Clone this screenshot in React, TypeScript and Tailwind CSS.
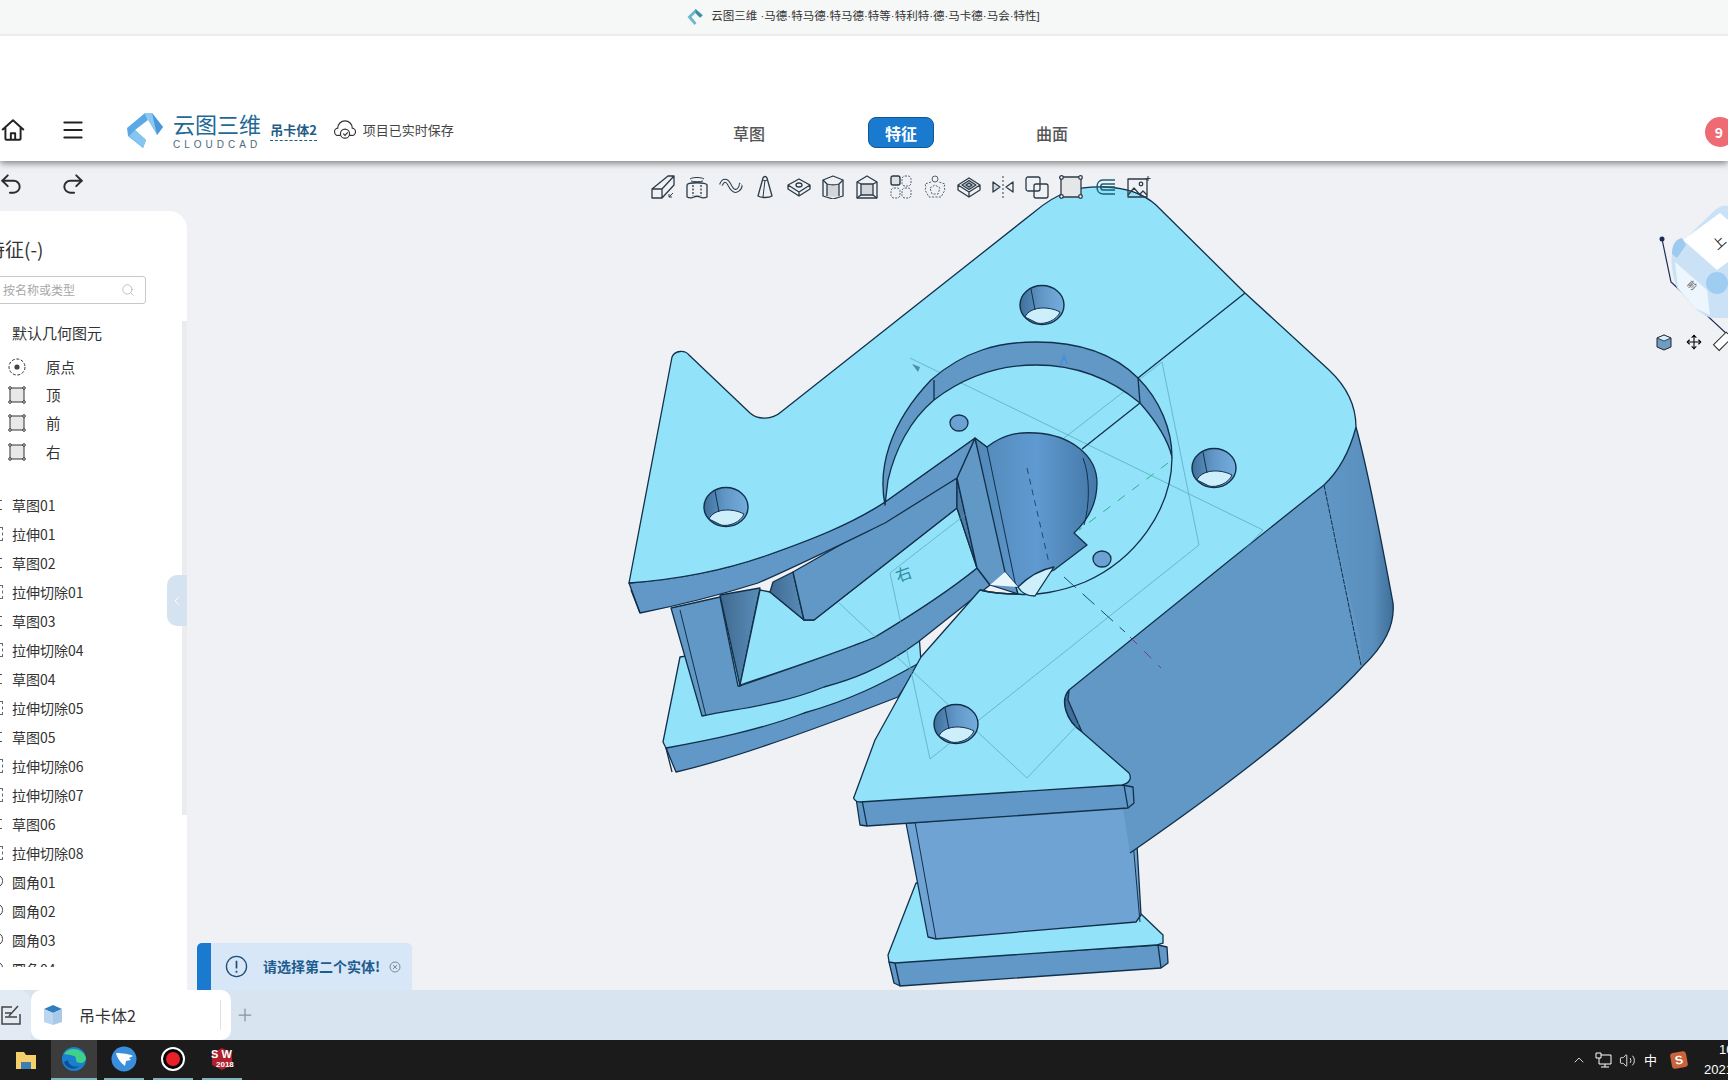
import { Undo2, Redo2, Search, ChevronLeft, Plus, ChevronUp, Volume2, Menu, Move } from "lucide-react";

const CJK = { fontFamily: '"Noto Sans CJK SC", "Noto Sans", sans-serif' };
const LATIN = { fontFamily: '"Liberation Sans", "Noto Sans CJK SC", sans-serif' };

const treeRows = [
  ["草图01", "s"], ["拉伸01", "e"], ["草图02", "s"], ["拉伸切除01", "e"], ["草图03", "s"],
  ["拉伸切除04", "e"], ["草图04", "s"], ["拉伸切除05", "e"], ["草图05", "s"], ["拉伸切除06", "e"],
  ["拉伸切除07", "e"], ["草图06", "s"], ["拉伸切除08", "e"], ["圆角01", "f"], ["圆角02", "f"],
  ["圆角03", "f"], ["圆角04", "f"],
];

const PlaneIcon = () => (
  <svg width="18" height="18" viewBox="0 0 18 18" fill="none" stroke="#333" strokeWidth="1">
    <rect x="2" y="2" width="14" height="14" fill="#e8e8e8" />
    <circle cx="2" cy="2" r="1.3" fill="#fff" />
    <circle cx="16" cy="2" r="1.3" fill="#fff" />
    <circle cx="2" cy="16" r="1.3" fill="#fff" />
    <circle cx="16" cy="16" r="1.3" fill="#fff" />
  </svg>
);

const toolIcons = [
  <g key="a"><path d="M1 14h10v9H1zM1 14L17 1h6v9L11 23M11 14L23 1" /><path d="M22 18l-4 4M18 19v3h3" strokeWidth="1" /></g>,
  <g key="b"><path d="M2 10c0-3 20-3 20 0v12c-2 1-5 1-7 0-1-1-5-1-6 0-2 1-5 1-7 0z" /><path d="M8 10v11M16 10v11" strokeDasharray="2 1.5" /><path d="M5 4c3-2 11-2 14 0M6 6c3 1 9 1 12 0" strokeWidth="1" /></g>,
  <g key="c"><path d="M2 10c2-6 6-5 8-1s5 9 9 6 2-5 3-6" strokeWidth="4" stroke="#2c3a47" /><path d="M2 10c2-6 6-5 8-1s5 9 9 6 2-5 3-6" strokeWidth="2" stroke="#eff1f4" /></g>,
  <g key="d"><path d="M10 3L5 21c3 2 11 2 14 0L14 3c-1-2-3-2-4 0z" /><path d="M10 5c1 1 3 1 4 0M12 5l-2 17" strokeWidth="1" /></g>,
  <g key="e"><path d="M12 4l11 6v4l-11 7L1 14v-4zM1 10l11 7 11-7M12 17v4" /><ellipse cx="12" cy="10" rx="3" ry="2" /></g>,
  <g key="f"><path d="M12 1l10 4v16l-10 3-10-3V5z" /><path d="M6 9c3 1 9 1 12 0v12c-3 1-9 1-12 0z" fill="#d2d6da" stroke="none" /><path d="M2 5l4 4c3 1 9 1 12 0l4-4M6 9v12M18 9v12" /></g>,
  <g key="g"><path d="M12 1l10 6v16H2V7z" /><path d="M6 9h12v11H6z" fill="#d2d6da" /><path d="M2 7l4 2M22 7l-4 2M6 20l-4 3M18 20l4 3" /></g>,
  <g key="h"><rect x="2" y="1" width="9" height="9" rx="2" strokeWidth="1.4" fill="#dfe2e5" /><g strokeDasharray="2 1.2" strokeWidth="1" stroke="#55616d"><rect x="13" y="1" width="9" height="10" rx="3" /><rect x="2" y="13" width="9" height="10" rx="3" /><rect x="13" y="13" width="9" height="10" rx="3" /></g></g>,
  <g key="i" strokeWidth="1" stroke="#55616d"><circle cx="12" cy="4" r="3" /><g strokeDasharray="2 1.4"><path d="M8 7L2 9l1 3-1 3 4 7h12l4-7-1-3 1-3-6-2" /><path d="M7 13l5-3 5 3-2 6H9z" /></g></g>,
  <g key="j"><path d="M12 3l11 7v5l-11 7L1 15v-5zM1 10l11 7 11-7M12 17v5" /><path d="M12 5.5l7 4.5-7 4.5L5 10z" fill="#b8c8d2" /><path d="M12 8l3 2-3 2-3-2z" /></g>,
  <g key="k"><path d="M12 1v22" strokeDasharray="2 2" strokeWidth="1" /><path d="M2 7l7 5-7 5z" fill="#d2d6da" /><path d="M22 7l-7 5 7 5z" /></g>,
  <g key="l"><rect x="1" y="2" width="14" height="14" rx="2" /><rect x="9" y="9" width="14" height="14" rx="2" /></g>,
  <g key="m"><rect x="2" y="2" width="20" height="20" fill="#e4e6e8" /><circle cx="2.5" cy="2.5" r="1.8" fill="#fff" /><circle cx="21.5" cy="2.5" r="1.8" fill="#fff" /><circle cx="2.5" cy="21.5" r="1.8" fill="#fff" /><circle cx="21.5" cy="21.5" r="1.8" fill="#fff" /></g>,
  <g key="n" stroke="#1d5f73" strokeWidth="1.5"><path d="M22 5H10c-8 0-8 14 0 14h12M22 9H10c-3 0-3 6 0 6h12M7 12h15" /></g>,
  <g key="o"><rect x="1" y="4" width="19" height="18" /><path d="M1 20l6-7 7 8M13 19l3-3 4 4" /><circle cx="14" cy="9" r="1.8" /><path d="M21 1v5M18.5 3.5h5" strokeWidth="1" /></g>,
];

// model is drawn in page coordinates, the svg starts at y=161
const Hole = ({ cx, cy }: { cx: number; cy: number }) => (
  <g>
    <ellipse cx={cx} cy={cy} rx="22" ry="19.5" fill="url(#holeGrad)" stroke="#12304a" strokeWidth="1.4" />
    <path d={`M${cx - 17} ${cy + 12} C${cx - 12} ${cy + 1} ${cx + 7} ${cy + 1} ${cx + 18} ${cy + 7} C${cx + 15} ${cy + 15} ${cx + 3} ${cy + 20} ${cx - 5} ${cy + 18} Z`} fill="#cdeefb" stroke="#12304a" strokeWidth="1" />
    <path d={`M${cx - 11} ${cy - 16} L${cx - 7} ${cy + 5}`} stroke="#12304a" strokeWidth="1" />
  </g>
);

const Model = () => (
  <svg className="absolute left-0 top-0" width="1728" height="829" viewBox="0 161 1728 829" fill="none">
    <defs>
      <linearGradient id="holeGrad" x1="0" x2="1" y1="0" y2="0">
        <stop offset="0" stopColor="#3f6f9c" />
        <stop offset="0.5" stopColor="#6298c8" />
        <stop offset="1" stopColor="#74aede" />
      </linearGradient>
      <linearGradient id="rimGrad" x1="0" x2="1" y1="0" y2="0">
        <stop offset="0" stopColor="#6097c6" />
        <stop offset="0.7" stopColor="#5a8fbd" />
        <stop offset="1" stopColor="#3f6f9a" />
      </linearGradient>
      <linearGradient id="cylGrad" x1="0" x2="1" y1="0" y2="0">
        <stop offset="0" stopColor="#5288b8" />
        <stop offset="0.5" stopColor="#5f9ad0" />
        <stop offset="1" stopColor="#4478a8" />
      </linearGradient>
      <linearGradient id="darkGrad" x1="0" x2="1" y1="0" y2="0">
        <stop offset="0" stopColor="#3f6a90" />
        <stop offset="1" stopColor="#5a8dba" />
      </linearGradient>
    </defs>
    <g stroke="#12304a" strokeWidth="1.3" strokeLinejoin="round">
      {/* bottom plate */}
      <path d="M889 962L1158 945L1167 947L1168 963L1161 968L900 986L894 983Z" fill="#6298c8" />
      <path d="M888 955L916 883L1120 880L1140 913L1163 935L1163 943L1156 945L895 963L889 962Z" fill="#92e2fa" />
      <path d="M895 963L900 986M1158 945L1161 968" />
      {/* column under the arrow */}
      <path d="M906 823L1110 808L1125 808L1135 810L1141 915L1136 922L936 939L928 937Z" fill="#6fa3d3" />
      <path d="M915 822L936 939M1130 808L1140 922" strokeWidth="1" />
      {/* body side wall */}
      <path d="M1356 427C1368 470 1385 560 1393 603C1395 625 1385 645 1362 667C1328 705 1250 770 1130 853L1120 790L1082 732C1065 720 1060 700 1069 690L1230 560L1324 485Z" fill="#6298c6" stroke="none" />
      <path d="M1362 667C1328 705 1250 770 1130 853" />
      <path d="M1356 427C1368 470 1385 560 1393 603C1395 625 1385 645 1362 667L1360 640L1324 485Z" fill="url(#rimGrad)" stroke="none" />
      <path d="M1356 427C1368 470 1385 560 1393 603C1395 625 1385 645 1362 667" />
      <path d="M1324 485L1361 665" strokeWidth="1" strokeDasharray="5 1" />
      <path d="M1069 690C1060 700 1065 720 1082 732L1068 700Z" fill="#3f6f9a" />
      {/* lower left plate */}
      <path d="M666 748L676 772C720 762 800 735 898 697L921 662L804 713Z" fill="#6298c8" />
      <path d="M663 742L680 657L918 620L921 662C880 685 850 700 804 713C760 730 710 740 666 748Z" fill="#92e2fa" />
      <path d="M666 748L672 772" />
      {/* frame under the arrow */}
      <path d="M671 608L720 597L738 686L740 686C800 665 845 650 875 637C920 610 950 590 977 568L990 585L918 642C880 670 850 680 824 687C780 705 740 708 702 716Z" fill="#6298c6" />
      <path d="M680 610L706 716" strokeWidth="1" />
      <path d="M720 595L760 588L740 686Z" fill="url(#darkGrad)" />
      {/* floor below the arrow */}
      <path d="M740 685L760 590L770 592L804 620L814 620L957 508L977 568C950 590 920 610 875 637C845 650 800 665 740 685Z" fill="#92e2fa" />
      <path d="M773 582L793 572L804 620L770 592Z" fill="url(#darkGrad)" />
      <path d="M793 572L957 478L957 508L814 620L804 620Z" fill="#6298c6" />
      <path d="M957 478L977 568L957 508Z" fill="#4d7ba6" />
      <path d="M957 478L975 438L1018 594L990 585L977 568Z" fill="#6298c6" />
      {/* upper arrow side */}
      <path d="M629 583L640 613C680 605 720 595 758 583C810 560 850 540 885 523L957 478L975 438L885 502C850 525 810 540 768 555C720 572 670 580 629 583Z" fill="#6298c8" />
      <path d="M631 590L640 613" />
      {/* middle arrow side */}
      <path d="M856 798L1122 785L1133 787L1134 803L1128 808L867 826L860 825Z" fill="#6298c8" />
      <path d="M862 800L867 826M1124 785L1128 808" />
      {/* top face, recess floor included */}
      <path d="M629 583L672 357C675 350 685 350 689 355L750 413C758 420 772 420 781 412L1033 213C1060 190 1080 186 1105 187C1130 188 1145 195 1156 205L1245 293L1329 370C1345 385 1356 405 1356 427C1350 450 1340 470 1324 485L1230 560L1069 690C1060 700 1065 720 1082 732L1129 773C1132 778 1130 783 1122 785L860 802C855 802 853 798 854 797L875 740L921 657L980 590C992 593 1006 594 1018 594L975 438L885 502C850 525 810 540 768 555C720 572 670 580 629 583Z" fill="#92e2fa" />
      {/* datum planes */}
      <g stroke="#4fa3b4" strokeWidth="0.8" opacity="0.8">
        <path d="M1162 362L1199 545L930 759L890 573L1162 362" />
        <path d="M910 358L1263 530L1027 778L839 603" />
      </g>
      {/* recess wall */}
      <path d="M885 505C878 470 888 425 931 380C965 350 1000 342 1036 342C1080 342 1115 355 1138 378C1160 400 1172 430 1172 457C1168 440 1155 420 1140 403C1110 378 1075 365 1036 365C995 365 960 380 934 400C910 420 895 450 888 480Z" fill="#6298c6" />
      <path d="M934 380L934 400M1138 378L1140 403" />
      {/* recess floor rim */}
      <path d="M1172 457C1172 510 1135 560 1085 582C1060 592 1035 596 1018 594C1006 594 992 593 980 590" />
      <path d="M1245 293L1138 378M1140 403L1082 449" />
      {/* bore */}
      <path d="M987 447C1005 433 1020 432 1036 433C1070 435 1097 455 1097 483C1097 505 1088 520 1074 533L1087 545L1054 570L1018 587L1005 572L975 438Z" fill="url(#cylGrad)" />
      <path d="M975 438L987 447L1016 587M1083 458C1090 475 1090 505 1084 525" strokeWidth="1" />
      <path d="M1018 587C1025 580 1038 570 1054 567L1035 596C1028 596 1022 594 1018 587Z" fill="#cdeefb" />
      <path d="M1018 587L1005 572L990 585Z" fill="#e8f6fb" stroke="none" />
      {/* holes */}
      <Hole cx={1042} cy={305} />
      <Hole cx={726} cy={507} />
      <Hole cx={1214} cy={468} />
      <Hole cx={956} cy={724} />
      <ellipse cx="959" cy="423" rx="9" ry="8" fill="#6ba2d2" />
      <ellipse cx="1102" cy="559" rx="9" ry="8" fill="#6ba2d2" />
    </g>
    <path d="M918 372l-6-8 8 3z" fill="#4f8fa0" />
    <text x="895" y="580" fontSize="16" fill="#2e8c9c" transform="rotate(-20 903 573)" style={CJK}>右</text>
    <path d="M1027 468L1049 563" stroke="#1c4a78" strokeWidth="1" strokeDasharray="6 5" />
    <path d="M1064 577L1125 632" stroke="#1c4a78" strokeWidth="1" strokeDasharray="16 9" />
    <path d="M1130 637L1161 668" stroke="#7a3b7e" strokeWidth="1" strokeDasharray="10 10" />
    <path d="M1168 463L1079 530" stroke="#2fb08a" strokeWidth="1" strokeDasharray="9 9" />
    <path d="M1060 366l4-10 3 8" stroke="#3d8ee0" strokeWidth="1.2" />
    {/* view cube */}
    <path d="M1662 239L1671 282L1728 335" stroke="#1c2a55" strokeWidth="1.2" />
    <circle cx="1662" cy="239" r="2.5" fill="#1c2a55" />
    <path d="M1672 252L1715 210Q1722 204 1728 206V318H1715Q1705 318 1695 308L1677 288Q1670 270 1672 252Z" fill="#cbe2f6" />
    <path d="M1683 240L1720 213L1728 220V262L1717 270Z" fill="#fff" />
    <path d="M1675 262L1707 290L1710 315L1695 308L1678 288Z" fill="#eef6fd" />
    <circle cx="1717" cy="283" r="11" fill="#9fcdf2" />
    <path d="M1672 254Q1672 240 1682 238L1686 245L1677 258Z" fill="#9ccaf0" />
    <text x="1712" y="247" fontSize="13" fill="#222" transform="rotate(-42 1719 242)" style={CJK}>上</text>
    <text x="1688" y="289" fontSize="9" fill="#555" transform="rotate(42 1693 285)" style={CJK}>前</text>
    <g transform="translate(1656 334)">
      <path d="M8 1l7 3v9l-7 3-7-3V4z" fill="#6f9cc0" stroke="#223" strokeWidth="1" />
      <path d="M1 4l7 3 7-3-7-3z" fill="#d8eefa" stroke="#223" strokeWidth="0.8" />
    </g>
    <g transform="translate(1686 334)" stroke="#222"><Move width="16" height="16" strokeWidth="1.6" /></g>
    <g transform="rotate(-45 1722 342)" stroke="#222" fill="#fff"><rect x="1714" y="338" width="18" height="8" /></g>
  </svg>
);

export default function App() {
  return (
    <div className="relative flex h-[1080px] w-[1728px] flex-col overflow-hidden bg-[#eff1f4]" style={CJK}>
      {/* window title */}
      <div className="z-20 flex h-[36px] items-center justify-center gap-[7px] border-b-2 border-[#ebecec] bg-[#f6f7f7] pr-[2px] text-[11.5px] text-[#333]" style={LATIN}>
        <svg width="18" height="18" viewBox="0 0 36 36"><path d="M19 2L3 18l14 16 4-4-10-12 8-8 9 10 6-6z" fill="#6fb6c8" /><path d="M19 2l14 14-6 2-8-8z" fill="#3d8ba0" /></svg>
        <span>云图三维 ·马德·特马德·特马德·特等·特利特·德·马卡德·马会·特性]</span>
      </div>

      {/* app header */}
      <div className="relative z-10 flex h-[125px] items-end bg-white pb-[9px] shadow-[0_2px_7px_rgba(0,0,0,0.5)]">
        <div className="flex h-[44px] items-center">
          <svg className="ml-0" width="26" height="26" viewBox="0 0 24 24" fill="none" stroke="#222" strokeWidth="1.8" strokeLinejoin="round">
            <path d="M2 12L12 3l10 9M5 10v10a1 1 0 001 1h12a1 1 0 001-1V10" />
            <path d="M10 21v-6h4v6" />
          </svg>
          <Menu className="ml-[34px] text-[#222]" size={26} strokeWidth={1.8} />
          <svg className="ml-[40px]" width="38" height="36" viewBox="0 0 38 36">
            <path d="M19 1L1 16l1 8 15 12 3-8-11-10 13-10z" fill="#5aa8e4" />
            <path d="M3 24l14 12 3-8-11-10z" fill="#86c6ee" />
            <path d="M19 1h7l11 14-6 8-9-15z" fill="#8cc8f0" />
            <path d="M26 1l11 14-6 8z" fill="#4a98da" />
          </svg>
          <div className="ml-[9px] flex flex-col leading-none">
            <span className="text-[22px] leading-[28px] text-[#1f6a96]">云图三维</span>
            <span className="mt-[1px] text-[10px] leading-[13px] tracking-[4px] text-[#4c6a7c]" style={{ fontFamily: '"Liberation Sans", sans-serif' }}>CLOUDCAD</span>
          </div>
          <span className="ml-[9px] mt-[2px] border-b border-dashed border-[#1f5d87] pb-[1px] text-[13px] font-bold leading-[18px] text-[#1f5d87]">吊卡体2</span>
          <svg className="ml-[17px]" width="22" height="20" viewBox="0 0 24 22" fill="none" stroke="#333" strokeWidth="1.3">
            <path d="M7 17H5a4 4 0 01-1-8 8 8 0 0116 0 4 4 0 01-1 8h-2" />
            <circle cx="12" cy="15" r="5" />
            <path d="M10 15l2 2 3-3.5" />
          </svg>
          <span className="ml-[7px] text-[13px] text-[#444]">项目已实时保存</span>
        </div>
      </div>
      <div className="pointer-events-none absolute left-[733px] top-[117px] z-10 flex h-[31px] items-center text-[16px] font-medium text-[#555]">
        <span className="w-[35px]">草图</span>
        <span className="ml-[100px] flex h-[31px] w-[66px] items-center justify-center rounded-[8px] border border-[#12578f] bg-[#1a7ad0] font-bold text-white">特征</span>
        <span className="ml-[102px]">曲面</span>
      </div>
      <div className="absolute right-[-7px] top-[117px] z-10 flex h-[30px] w-[30px] items-center justify-center rounded-full bg-[#ee6b73] pr-[2px] text-[14px] font-bold text-white">9</div>

      {/* workspace */}
      <div className="relative flex min-h-0 flex-1">
        <Model />
        <div className="relative z-[5] flex w-[187px] flex-col">
          <div className="flex h-[50px] items-center pb-[4px] pl-[1px] text-[#2c2c2c]">
            <Undo2 className="-ml-[3px]" size={26} strokeWidth={1.8} />
            <Redo2 className="ml-[36px]" size={26} strokeWidth={1.8} />
          </div>
          <div className="relative min-h-0 flex-1 overflow-hidden rounded-tr-[18px] bg-white">
            <div className="-ml-[14px] mt-[24px] text-[19px] leading-[28px] text-[#333]">特征(-)</div>
            <div className="-ml-[10px] mt-[13px] flex h-[28px] w-[156px] items-center justify-between rounded-[3px] border border-[#c8c8c8] pl-[12px] pr-[10px] text-[12px] text-[#a8a8a8]">
              按名称或类型
              <Search size={14} strokeWidth={1.2} />
            </div>
            <div className="mt-[14px] pl-[12px] text-[15px] leading-[29px] text-[#333]">默认几何图元</div>
            <div className="mt-[5.5px] flex flex-col text-[14.5px] text-[#333]">
              <div className="flex h-[28.3px] items-center gap-[20px] pl-[8px]">
                <svg width="18" height="18" viewBox="0 0 18 18" fill="none" stroke="#333"><circle cx="9" cy="9" r="8" strokeDasharray="3 1.6" /><circle cx="9" cy="9" r="2.6" fill="#444" stroke="none" /></svg>
                原点
              </div>
              {["顶", "前", "右"].map((t) => (
                <div key={t} className="flex h-[28.3px] items-center gap-[20px] pl-[8px]"><PlaneIcon />{t}</div>
              ))}
            </div>
            <div className="relative mt-[25px] flex h-[476px] flex-col overflow-hidden">
              {treeRows.map(([label, kind]) => (
                <div key={label} className="flex h-[29px] shrink-0 items-center pl-[12px] text-[14px] text-[#333]">
                  <span className="absolute left-0 h-[14px] w-[4px] overflow-hidden">
                    {kind === "s" && <span className="block h-[10px] w-[2px] translate-y-[2px] border-y border-[#555]" />}
                    {kind === "e" && <span className="block h-[14px] w-[3px] border-y border-r border-dashed border-[#667]" />}
                    {kind === "f" && <span className="-ml-[8px] block h-[12px] w-[11px] rounded-full border border-[#444]" />}
                  </span>
                  {label}
                </div>
              ))}
            </div>
            <div className="absolute bottom-[175px] right-0 top-[110px] w-[5px] bg-[#ebecee]" />
            <div className="absolute right-0 top-[364px] flex h-[51px] w-[20px] items-center justify-center rounded-l-[10px] bg-[#d5e3f0] text-white">
              <ChevronLeft size={16} strokeWidth={1.3} />
            </div>
          </div>
        </div>
        <div className="relative z-[5] flex min-w-0 flex-1 flex-col">
          <div className="flex gap-[10px] pl-[464px] pt-[14px]">
            {toolIcons.map((icon, i) => (
              <svg key={i} width="24" height="24" viewBox="0 0 24 24" fill="none" stroke="#2c3a47" strokeWidth="1.3" strokeLinejoin="round">{icon}</svg>
            ))}
          </div>
          <div className="mt-auto ml-[10px] flex h-[47px] w-[215px] items-center overflow-hidden rounded-t-[5px] bg-[#d8e7f7]">
            <div className="h-full w-[14px] bg-[#1a7ad0]" />
            <svg className="ml-[14px]" width="23" height="23" viewBox="0 0 24 24" fill="none" stroke="#1d4f78" strokeWidth="1.4"><circle cx="12" cy="12" r="10.5" /><path d="M12 6v8M12 16.5v2" strokeWidth="1.8" /></svg>
            <span className="ml-[15px] text-[14px] font-bold text-[#1d5c8e]">请选择第二个实体!</span>
            <svg className="ml-[9px]" width="12" height="12" viewBox="0 0 12 12" fill="none" stroke="#7d8a96"><circle cx="6" cy="6" r="5" /><path d="M4 4l4 4M8 4l-4 4" /></svg>
          </div>
        </div>
      </div>

      {/* document tabs */}
      <div className="relative z-[6] flex h-[50px] items-stretch bg-[#d8e5f0]">
        <div className="flex w-[31px] items-center rounded-tr-[12px] bg-[#e2ebf3] pl-[1px]">
          <svg width="20" height="20" viewBox="0 0 20 20" fill="none" stroke="#444" strokeWidth="1.5"><path d="M11 2H1v17h18V9M4 8h6M4 12h12M8 11l9-10" /></svg>
        </div>
        <div className="flex w-[200px] items-center rounded-[10px] bg-white pl-[11px]">
          <svg width="22" height="22" viewBox="0 0 22 22"><path d="M11 1l9 4-9 4-9-4z" fill="#2f7fc0" /><path d="M2 5l9 4v12l-9-3z" fill="#bcd6f0" /><path d="M20 5l-9 4v12l9-3z" fill="#a9c9ea" /></svg>
          <span className="ml-[15px] text-[16px] text-[#333]">吊卡体2</span>
          <span className="ml-auto mr-[10px] h-[30px] w-px bg-[#e2e2e2]" />
        </div>
        <div className="flex items-center pl-[4px]"><Plus className="text-[#8b9299]" size={20} strokeWidth={1.5} /></div>
      </div>

      {/* windows taskbar */}
      <div className="relative z-[6] flex h-[40px] items-center bg-[#1b1b1b] text-white">
        <div className="flex h-full w-[51px] items-center justify-center">
          <svg width="22" height="20" viewBox="0 0 22 20"><path d="M1 2h8l2 3h10v14H1z" fill="#f4cf6a" /><path d="M6 12h10v7H6z" fill="#3d7fb5" /></svg>
        </div>
        <div className="flex h-full w-[46px] items-center justify-center border-b-2 border-[#7fb4c0] bg-[#3c3c3c]">
          <svg width="26" height="26" viewBox="0 0 26 26"><circle cx="13" cy="13" r="12" fill="#1b7fd0" /><path d="M3 8C8 0 22 2 25 12c0 5-6 6-9 4-2-2 0-5-3-6-5-2-9-1-10-2z" fill="#3fd08a" /><path d="M7 14c0 5 6 8 11 6-5 5-13 2-15-4z" fill="#0e4f94" /></svg>
        </div>
        <div className="ml-[7px] flex h-full w-[40px] items-center justify-center border-b-2 border-[#7fb4c0]">
          <svg width="26" height="26" viewBox="0 0 26 26"><circle cx="13" cy="13" r="12.5" fill="#3a8fdc" /><path d="M5 7c6 0 14 1 17 3l-4 2 2 2-5 1-1 5c-4-3-8-8-9-13z" fill="#fff" /></svg>
        </div>
        <div className="ml-[9px] flex h-full w-[40px] items-center justify-center border-b-2 border-[#7fb4c0]">
          <span className="flex h-[24px] w-[24px] items-center justify-center rounded-full border-2 border-white bg-black"><span className="h-[14px] w-[14px] rounded-full bg-[#e8202a]" /></span>
        </div>
        <div className="relative ml-[9px] flex h-full w-[40px] items-center justify-center border-b-2 border-[#7fb4c0]">
          <svg width="22" height="24" viewBox="0 0 22 24"><path d="M11 1l10 5v12l-10 5-10-5V6z" fill="#b01f2c" /></svg>
          <span className="absolute left-[9px] top-[9px] text-[11px] font-bold leading-none" style={{ fontFamily: '"Liberation Sans", sans-serif' }}>S W</span>
          <span className="absolute left-[14px] top-[21px] text-[8px] font-bold leading-none" style={{ fontFamily: '"Liberation Sans", sans-serif' }}>2018</span>
        </div>
        <div className="-mr-[8px] ml-auto flex items-center text-[13px]">
          <ChevronUp size={16} strokeWidth={1.2} />
          <svg className="ml-[8px]" width="17" height="16" viewBox="0 0 17 16" fill="none" stroke="#fff"><path d="M1 1h5v5H1zM6 3h10v9H4V6M10 12v3M6 15h8" /></svg>
          <Volume2 className="ml-[7px]" size={17} strokeWidth={1.2} />
          <span className="ml-[8px]">中</span>
          <span className="ml-[14px] flex h-[16px] w-[16px] rotate-[-10deg] items-center justify-center rounded-[3px] bg-[#c8643c] text-[12px] font-bold leading-none" style={{ fontFamily: '"Liberation Sans", sans-serif' }}>S</span>
          <span className="ml-[17px] flex w-[32px] flex-col whitespace-nowrap text-right leading-[20px]" style={{ fontFamily: '"Liberation Sans", sans-serif' }}>
            <span className="pl-[15px] text-left">10</span>
            <span className="text-left">2021</span>
          </span>
        </div>
      </div>
    </div>
  );
}
